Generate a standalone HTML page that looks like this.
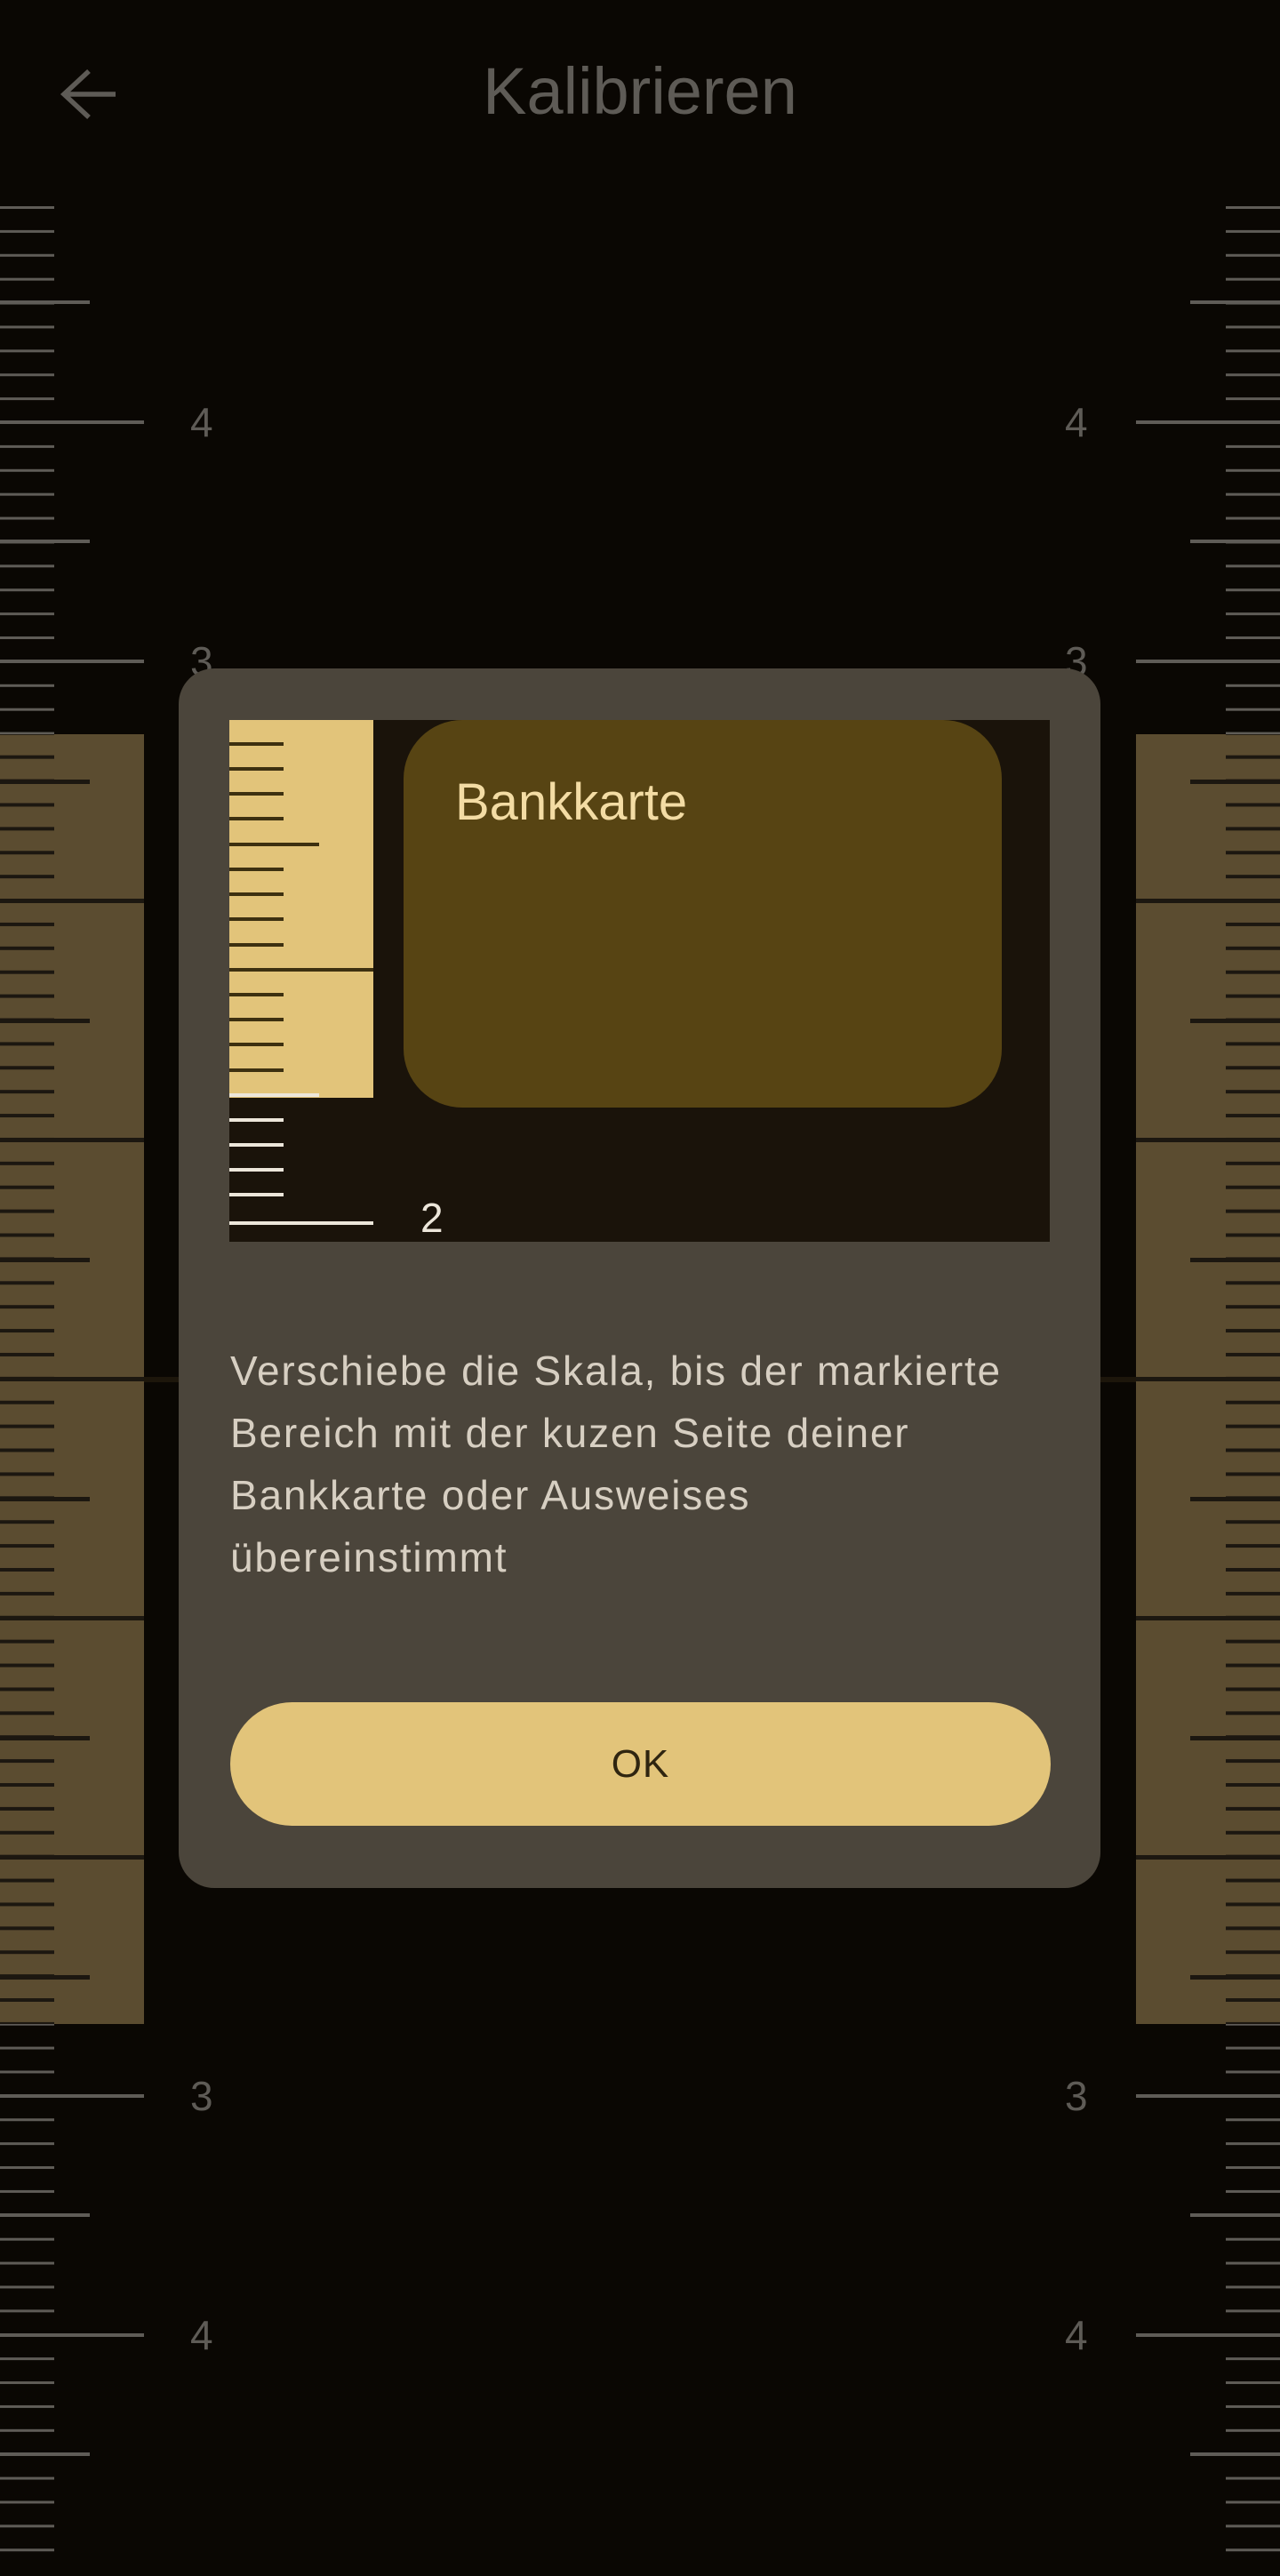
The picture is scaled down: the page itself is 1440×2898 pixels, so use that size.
<!DOCTYPE html>
<html><head><meta charset="utf-8"><style>
*{margin:0;padding:0;box-sizing:border-box}
body{width:1440px;height:2898px;background:#0a0703;position:relative;overflow:hidden;font-family:"Liberation Sans",sans-serif}
.abs{position:absolute}
.s,.h,.m{position:absolute;background-repeat:repeat-y}
.g.s{background-image:linear-gradient(#5f5c57 0,#5f5c57 3px,transparent 3px);background-size:100% 26.9px}
.g.h,.g.m{background-image:linear-gradient(#5f5c57 0,#5f5c57 4px,transparent 4px);background-size:100% 269px}
.d.s{background-image:linear-gradient(#1c1710 0,#1c1710 4px,transparent 4px);background-size:100% 26.9px}
.d.h,.d.m{background-image:linear-gradient(#1c1710 0,#1c1710 5px,transparent 5px);background-size:100% 269px}
.s{width:61px}.h{width:101px}.m{width:162px}
</style></head><body>

<!-- left ruler gray ticks -->
<div class="g s" style="left:0;top:231.5px;height:2640px"></div>
<div class="g h" style="left:0;top:338px;height:2540px"></div>
<div class="g m" style="left:0;top:473px;height:2400px"></div>
<!-- right -->
<div class="g s" style="right:0;top:231.5px;height:2640px"></div>
<div class="g h" style="right:0;top:338px;height:2540px"></div>
<div class="g m" style="right:0;top:473px;height:2400px"></div>

<!-- center line -->
<div class="abs" style="left:0;top:1549px;width:1440px;height:6px;background:#1d160b"></div>

<!-- bands -->
<div class="abs" style="left:0;top:826px;width:162px;height:1451px;background:#5b4c30;overflow:hidden">
 <div class="d s" style="left:0;top:0;height:1451px;background-position:0 -3.2px"></div>
 <div class="d h" style="left:0;top:0;height:1451px;background-position:0 51px"></div>
 <div class="d m" style="left:0;top:0;height:1451px;background-position:0 185px"></div>
</div>
<div class="abs" style="left:1278px;top:826px;width:162px;height:1451px;background:#5b4c30;overflow:hidden">
 <div class="d s" style="right:0;top:0;height:1451px;background-position:0 -3.2px"></div>
 <div class="d h" style="right:0;top:0;height:1451px;background-position:0 51px"></div>
 <div class="d m" style="right:0;top:0;height:1451px;background-position:0 185px"></div>
</div>

<!-- labels -->
<div class="abs" style="left:214px;top:447px;font-size:46px;color:#5e5b56;line-height:56px">4</div>
<div class="abs" style="left:214px;top:716px;font-size:46px;color:#5e5b56;line-height:56px">3</div>
<div class="abs" style="left:214px;top:2330px;font-size:46px;color:#5e5b56;line-height:56px">3</div>
<div class="abs" style="left:214px;top:2599px;font-size:46px;color:#5e5b56;line-height:56px">4</div>
<div class="abs" style="left:1198px;top:447px;font-size:46px;color:#5e5b56;line-height:56px">4</div>
<div class="abs" style="left:1198px;top:716px;font-size:46px;color:#5e5b56;line-height:56px">3</div>
<div class="abs" style="left:1198px;top:2330px;font-size:46px;color:#5e5b56;line-height:56px">3</div>
<div class="abs" style="left:1198px;top:2599px;font-size:46px;color:#5e5b56;line-height:56px">4</div>

<!-- header -->
<svg class="abs" style="left:60px;top:70px" width="80" height="70" viewBox="0 0 80 70">
<path d="M70 36 H14 M40 10 L12 36 L40 62" fill="none" stroke="#5e5b56" stroke-width="5.5"/>
</svg>
<div class="abs" style="left:0;width:1440px;top:58px;text-align:center;font-size:74px;line-height:90px;color:#5e5b56">Kalibrieren</div>

<!-- dialog -->
<div class="abs" style="left:201px;top:752px;width:1037px;height:1372px;background:#4b453b;border-radius:40px">
 <div class="abs" style="left:57px;top:58px;width:923px;height:587px;background:#1a130a;overflow:hidden">
  <div class="abs" style="left:0;top:0;width:162px;height:425px;background:#e2c47a"></div>
  <svg class="abs" style="left:0;top:0" width="170" height="587">
   <g stroke="#3d3010" stroke-width="4">
    <path d="M0 27h61M0 55h61M0 83h61M0 111h61M0 140h101M0 168h61M0 196h61M0 224h61M0 253h61M0 281h162M0 309h61M0 337h61M0 365h61M0 394h61"/>
   </g>
   <g stroke="#ece6da" stroke-width="4">
    <path d="M0 422h101M0 450h61M0 478h61M0 506h61M0 534h61M0 566h162"/>
   </g>
  </svg>
  <div class="abs" style="left:196px;top:0;width:673px;height:436px;background:#574413;border-radius:66px"></div>
  <div class="abs" style="left:254px;top:58px;font-size:58px;line-height:70px;color:#f3dca4">Bankkarte</div>
  <div class="abs" style="left:215px;top:532px;font-size:46px;line-height:56px;color:#ece6da">2</div>
 </div>
 <div class="abs" style="left:58px;top:755px;width:960px;font-size:46px;line-height:70px;color:#d7cfc2;letter-spacing:1.8px">Verschiebe die Skala, bis der markierte<br>Bereich mit der kuzen Seite deiner<br>Bankkarte oder Ausweises<br>übereinstimmt</div>
 <div class="abs" style="left:58px;top:1163px;width:923px;height:139px;background:#e2c47a;border-radius:70px;text-align:center;line-height:139px;font-size:44px;color:#2f2510;letter-spacing:1px">OK</div>
</div>

</body></html>
